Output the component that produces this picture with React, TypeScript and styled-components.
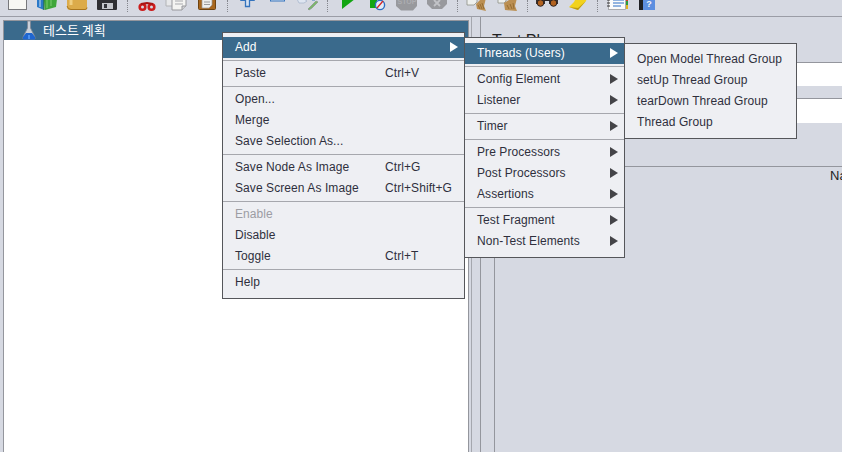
import React from "react";
import styled, { createGlobalStyle } from "styled-components";

const Global = createGlobalStyle`
  html, body { margin: 0; padding: 0; background: #d6d9e2; }
  body { font-family: "Liberation Sans", Arial, sans-serif; }
`;

const Page = styled.div`
  position: relative;
  width: 842px;
  height: 452px;
  overflow: hidden;
  background: #d6d9e2;
  display: flex;
  flex-direction: column;
`;

const Toolbar = styled.div`
  flex: none;
  height: 16px;
  padding-left: 2px;
  display: flex;
  border-bottom: 1px solid #9b9da6;
`;

const ToolSlot = styled.svg`
  flex: none;
  display: block;
  width: 30px;
  height: 16px;
`;

const ToolSep = styled.div`
  flex: none;
  width: 10px;
  height: 16px;
  display: flex;
  justify-content: center;
  &::before {
    content: "";
    height: 12px;
    border-left: 1px dotted #85878e;
  }
`;

const Main = styled.div`
  flex: 1;
  min-height: 0;
  display: flex;
`;

const Tree = styled.div`
  flex: none;
  width: 464px;
  margin: 3px 0 0 3px;
  background: #fff;
  border: 1px solid #94969d;
  border-bottom: 0;
`;

const TreeRow = styled.div`
  height: 19px;
  background: #3a6a8c;
  color: #fff;
  display: flex;
  align-items: center;
  padding-left: 18px;
  gap: 7px;
  font-family: "Noto Sans CJK KR", "Liberation Sans", sans-serif;
  font-size: 13px;
  line-height: 17px;
`;

const TreeLabel = styled.span`
  margin-bottom: 3px;
`;

const Splitter = styled.div`
  flex: none;
  width: 11px;
  display: flex;
  padding-left: 2px;
  box-sizing: border-box;
  &::before {
    content: "";
    border-left: 1px solid #a5a7ae;
  }
`;

const Panel = styled.div`
  flex: 1;
  min-width: 0;
  border-left: 1px solid #94969d;
  padding-top: 14px;
  display: flex;
  flex-direction: column;
`;

const Title = styled.div`
  height: 20px;
  line-height: 20px;
  padding-left: 11px;
  font-size: 16px;
  color: #222;
`;

const Field = styled.div<{ $h: number; $gap: number }>`
  flex: none;
  height: ${(p) => p.$h}px;
  box-sizing: border-box;
  margin: ${(p) => p.$gap}px 0 0 13px;
  background: #fff;
  border-top: 1px solid #94969d;
`;

const Section = styled.div`
  flex: 1;
  margin: 43px 0 0 13px;
  border-top: 1px solid #94969d;
  border-left: 1px solid #94969d;
`;

const TableHead = styled.div`
  padding: 0 0 0 335px;
  height: 17px;
  line-height: 17px;
  font-size: 13px;
  color: #222;
  white-space: nowrap;
`;

const Menu = styled.div<{ $left: number; $top: number; $width: number; $padTop: number; $z: number }>`
  position: absolute;
  left: ${(p) => p.$left}px;
  top: ${(p) => p.$top}px;
  width: ${(p) => p.$width}px;
  z-index: ${(p) => p.$z};
  box-sizing: border-box;
  padding: ${(p) => p.$padTop}px 0 5px;
  background: #eeeff3;
  border: 1px solid #55565a;
`;

const Row = styled.div<{ $active?: boolean; $disabled?: boolean }>`
  height: 21px;
  box-sizing: border-box;
  display: flex;
  align-items: center;
  padding: 0 6px 1px 12px;
  font-size: 12px;
  letter-spacing: 0.08px;
  white-space: nowrap;
  background: ${(p) => (p.$active ? "#3a6a8c" : "transparent")};
  color: ${(p) => (p.$active ? "#fff" : p.$disabled ? "#9c9da3" : "#2f2f3d")};
`;

const Label = styled.span<{ $w?: number }>`
  flex: none;
  width: ${(p) => (p.$w ? `${p.$w}px` : "auto")};
`;

const Arrow = styled.span<{ $active?: boolean }>`
  margin-left: auto;
  width: 0;
  height: 0;
  border-style: solid;
  border-width: 5px 0 5px 8px;
  border-color: transparent transparent transparent ${(p) => (p.$active ? "#fff" : "#444448")};
`;

const Sep = styled.div`
  height: 5px;
  display: flex;
  align-items: center;
  &::before {
    content: "";
    flex: 1;
    height: 1px;
    background: #a6a7ad;
  }
`;

type Item = { label?: string; shortcut?: string; sub?: boolean; active?: boolean; disabled?: boolean };

const MenuRows = ({ items, labelWidth }: { items: Item[]; labelWidth?: number }) => (
  <>
    {items.map((it, i) =>
      it.label ? (
        <Row key={i} $active={it.active} $disabled={it.disabled}>
          <Label $w={labelWidth}>{it.label}</Label>
          {it.shortcut && <span>{it.shortcut}</span>}
          {it.sub && <Arrow $active={it.active} />}
        </Row>
      ) : (
        <Sep key={i} />
      )
    )}
  </>
);

const mainMenu: Item[] = [
  { label: "Add", sub: true, active: true },
  {},
  { label: "Paste", shortcut: "Ctrl+V" },
  {},
  { label: "Open..." },
  { label: "Merge" },
  { label: "Save Selection As..." },
  {},
  { label: "Save Node As Image", shortcut: "Ctrl+G" },
  { label: "Save Screen As Image", shortcut: "Ctrl+Shift+G" },
  {},
  { label: "Enable", disabled: true },
  { label: "Disable" },
  { label: "Toggle", shortcut: "Ctrl+T" },
  {},
  { label: "Help" },
];

const addMenu: Item[] = [
  { label: "Threads (Users)", sub: true, active: true },
  {},
  { label: "Config Element", sub: true },
  { label: "Listener", sub: true },
  {},
  { label: "Timer", sub: true },
  {},
  { label: "Pre Processors", sub: true },
  { label: "Post Processors", sub: true },
  { label: "Assertions", sub: true },
  {},
  { label: "Test Fragment", sub: true },
  { label: "Non-Test Elements", sub: true },
];

const threadMenu: Item[] = [
  { label: "Open Model Thread Group" },
  { label: "setUp Thread Group" },
  { label: "tearDown Thread Group" },
  { label: "Thread Group" },
];

const Icon = ({ children }: { children: React.ReactNode }) => (
  <ToolSlot viewBox="0 0 30 16">{children}</ToolSlot>
);

const Flask = () => (
  <svg width="14" height="19" viewBox="0 0 14 19">
    <path d="M5.500 0h3v7l4.500 9v2H1v-2l4.500-9z" fill="#c9d0da" stroke="#7d8794" strokeWidth="0.800" />
    <path d="M4 12h6l3 4v2.500H1V16z" fill="#1f66d0" />
    <path d="M6 14h2v4H6z" fill="#4c90f0" />
  </svg>
);

export default function App() {
  return (
    <Page>
      <Global />
      <Toolbar>
        <Icon>
          <rect x="6.500" y="-3" width="18" height="12.500" fill="#f7f7f4" stroke="#77787c" />
        </Icon>
        <Icon>
          <path d="M5 -2l7 1v11l-7-3z" fill="#2a78c8" />
          <path d="M12 -1h13l-1 8-11 3z" fill="#3fa63a" />
          <path d="M8 0v7" stroke="#cfe2f5" />
          <path d="M15 0v8M19 0v6" stroke="#7ccc70" />
          <path d="M12 -1v11" stroke="#1f6f24" />
        </Icon>
        <Icon>
          <path d="M5 -2h20v10q0 2-2 2H8q-3 0-3-3z" fill="#dcab4a" />
          <path d="M5 6q1 3.500 4 3.500h14q2 0 2-2" fill="none" stroke="#a9761f" />
          <path d="M9 -2v7" stroke="#f0cf81" strokeWidth="3" />
        </Icon>
        <Icon>
          <rect x="5" y="-3" width="20" height="13" rx="1" fill="#2f2f33" />
          <rect x="10" y="3" width="11" height="6" fill="#c4c6cb" />
          <rect x="12" y="4" width="3" height="4" fill="#33343a" />
        </Icon>
        <ToolSep />
        <Icon>
          <circle cx="10.500" cy="7" r="2.800" fill="none" stroke="#cc1c1c" strokeWidth="2.600" />
          <circle cx="19.500" cy="7" r="2.800" fill="none" stroke="#cc1c1c" strokeWidth="2.600" />
          <path d="M9 4l6-1 6 1" fill="none" stroke="#a81414" strokeWidth="2" />
        </Icon>
        <Icon>
          <path d="M4 -2h14v8H4z" fill="#e7e8ea" stroke="#b2b3b6" />
          <path d="M10 -2h14v8l-4 4H10z" fill="#f4f4f2" stroke="#97989c" />
          <path d="M13 1h8M13 4h8" stroke="#a8a9ad" />
          <path d="M20 10v-4h4" fill="#d0d1d4" stroke="#97989c" />
        </Icon>
        <Icon>
          <rect x="6.500" y="-3" width="17" height="12.500" rx="1" fill="#a8671e" stroke="#6e4310" />
          <path d="M10 -2h10v7l-3 3h-7z" fill="#eeeeec" stroke="#9a9a9a" strokeWidth="0.700" />
          <path d="M12 2h6M12 4.500h6" stroke="#9a9a9a" />
        </Icon>
        <ToolSep />
        <Icon>
          <path d="M8.500 -3h14v3.500h-5v3h-4v-3h-5z" fill="#dbe6f4" stroke="#3574bd" />
          <path d="M13.500 -3v9.500h4V-3" fill="#d5e2f2" stroke="#3574bd" strokeWidth="1.300" />
        </Icon>
        <Icon>
          <rect x="8.500" y="-4" width="14" height="5" fill="#d5e2f2" stroke="#3574bd" />
        </Icon>
        <Icon>
          <path d="M5 -1h7l3 2-3 2H7z" fill="#dfe6f1" stroke="#a4b2c8" strokeWidth="0.700" />
          <path d="M24 1l-6 6-2 2 1 1 3-2 6-6z" fill="#7bb86a" stroke="#88958a" strokeWidth="0.700" />
          <path d="M20 0h3" stroke="#8aa8cf" strokeWidth="2" />
        </Icon>
        <ToolSep />
        <Icon>
          <path d="M10 -1h13L10 9z" fill="#12a512" />
        </Icon>
        <Icon>
          <path d="M8 -1h7v9H8z" fill="#12a512" />
          <circle cx="18" cy="5" r="4.600" fill="#e4ecf7" stroke="#2f6fc4" strokeWidth="1.400" />
          <path d="M15 8l6-7" stroke="#d42626" strokeWidth="1.300" />
        </Icon>
        <Icon>
          <path d="M9 -6h12l4 4v8l-4 4.500H9L4 6v-8z" fill="#98999d" />
          <text x="15" y="4" textAnchor="middle" fontFamily="Liberation Sans, sans-serif" fontWeight="bold" fontSize="7" fill="#adaeb2">STOP</text>
        </Icon>
        <Icon>
          <path d="M10 -5h10l5 5v4l-5 5H10L5 4V0z" fill="#98999d" />
          <path d="M12 0l6 6M18 0l-6 6" stroke="#c2c3c7" strokeWidth="1.800" />
        </Icon>
        <ToolSep />
        <Icon>
          <path d="M5 -2h10v4l-3 3H5z" fill="#eef0ee" stroke="#8d9086" strokeWidth="0.800" />
          <path d="M14 4l7-7 3 1-2 8 2 5-9-2z" fill="#bb8f52" />
          <path d="M16 5l2 4M18 4l2 5M20 3l2 6" stroke="#8c642c" strokeWidth="0.800" />
        </Icon>
        <Icon>
          <path d="M6 -2h8v3l-2 2H6z" fill="#eef0ee" stroke="#8d9086" strokeWidth="0.800" />
          <path d="M12 3l10-6 3 1-2 8 2 5-12-1z" fill="#bb8f52" />
          <path d="M15 5l2 4M18 4l2 5M21 3l1 6" stroke="#8c642c" strokeWidth="0.800" />
        </Icon>
        <ToolSep />
        <Icon>
          <rect x="4" y="-3" width="9" height="7" fill="#3a3230" />
          <rect x="17" y="-3" width="9" height="7" fill="#3a3230" />
          <rect x="12" y="-2" width="6" height="3" fill="#2a2524" />
          <circle cx="8.500" cy="3" r="3.300" fill="#b2621f" stroke="#2a2220" />
          <circle cx="21.500" cy="3" r="3.300" fill="#b2621f" stroke="#2a2220" />
        </Icon>
        <Icon>
          <path d="M14 -2l11 0-1 3-8 9-9-3 5-5z" fill="#f2d21c" />
          <path d="M24 1l-8 9-9-3 9 1z" fill="#bb9a12" />
          <path d="M8 -3h5v3H8z" fill="#d92a1c" />
        </Icon>
        <ToolSep />
        <Icon>
          <rect x="6.500" y="-3" width="17" height="12.500" fill="#fbfbfb" stroke="#8f9096" strokeWidth="0.700" />
          <path d="M5 0h3M5 3h3M5 6h3" stroke="#333" strokeWidth="1.200" />
          <path d="M11 0h11M11 3h11M11 6h8" stroke="#2c6fc6" strokeWidth="1.200" />
          <rect x="24" y="-3" width="2" height="4" fill="#d23c2c" />
          <rect x="24" y="1" width="2" height="4" fill="#2e9c3a" />
          <rect x="24" y="5" width="2" height="4" fill="#e3b21f" />
        </Icon>
        <Icon>
          <rect x="7" y="-3" width="5" height="13" fill="#1f2024" />
          <rect x="11" y="-3" width="12" height="13" fill="#5d8fe0" />
          <text x="17" y="7" textAnchor="middle" fontFamily="Liberation Sans, sans-serif" fontWeight="bold" fontSize="9" fill="#f2f5fb">?</text>
        </Icon>
      </Toolbar>
      <Main>
        <Tree>
          <TreeRow>
            <Flask />
            <TreeLabel>테스트 계획</TreeLabel>
          </TreeRow>
        </Tree>
        <Splitter />
        <Panel>
          <Title>Test Plan</Title>
          <Field $h={24} $gap={11} />
          <Field $h={25} $gap={12} />
          <Section>
            <TableHead>Name:</TableHead>
          </Section>
        </Panel>
      </Main>
      <Menu $left={222} $top={32} $width={243} $padTop={4} $z={1}>
        <MenuRows items={mainMenu} labelWidth={150} />
      </Menu>
      <Menu $left={464} $top={37} $width={161} $padTop={5} $z={2}>
        <MenuRows items={addMenu} />
      </Menu>
      <Menu $left={624} $top={43} $width={173} $padTop={5} $z={3}>
        <MenuRows items={threadMenu} />
      </Menu>
    </Page>
  );
}
